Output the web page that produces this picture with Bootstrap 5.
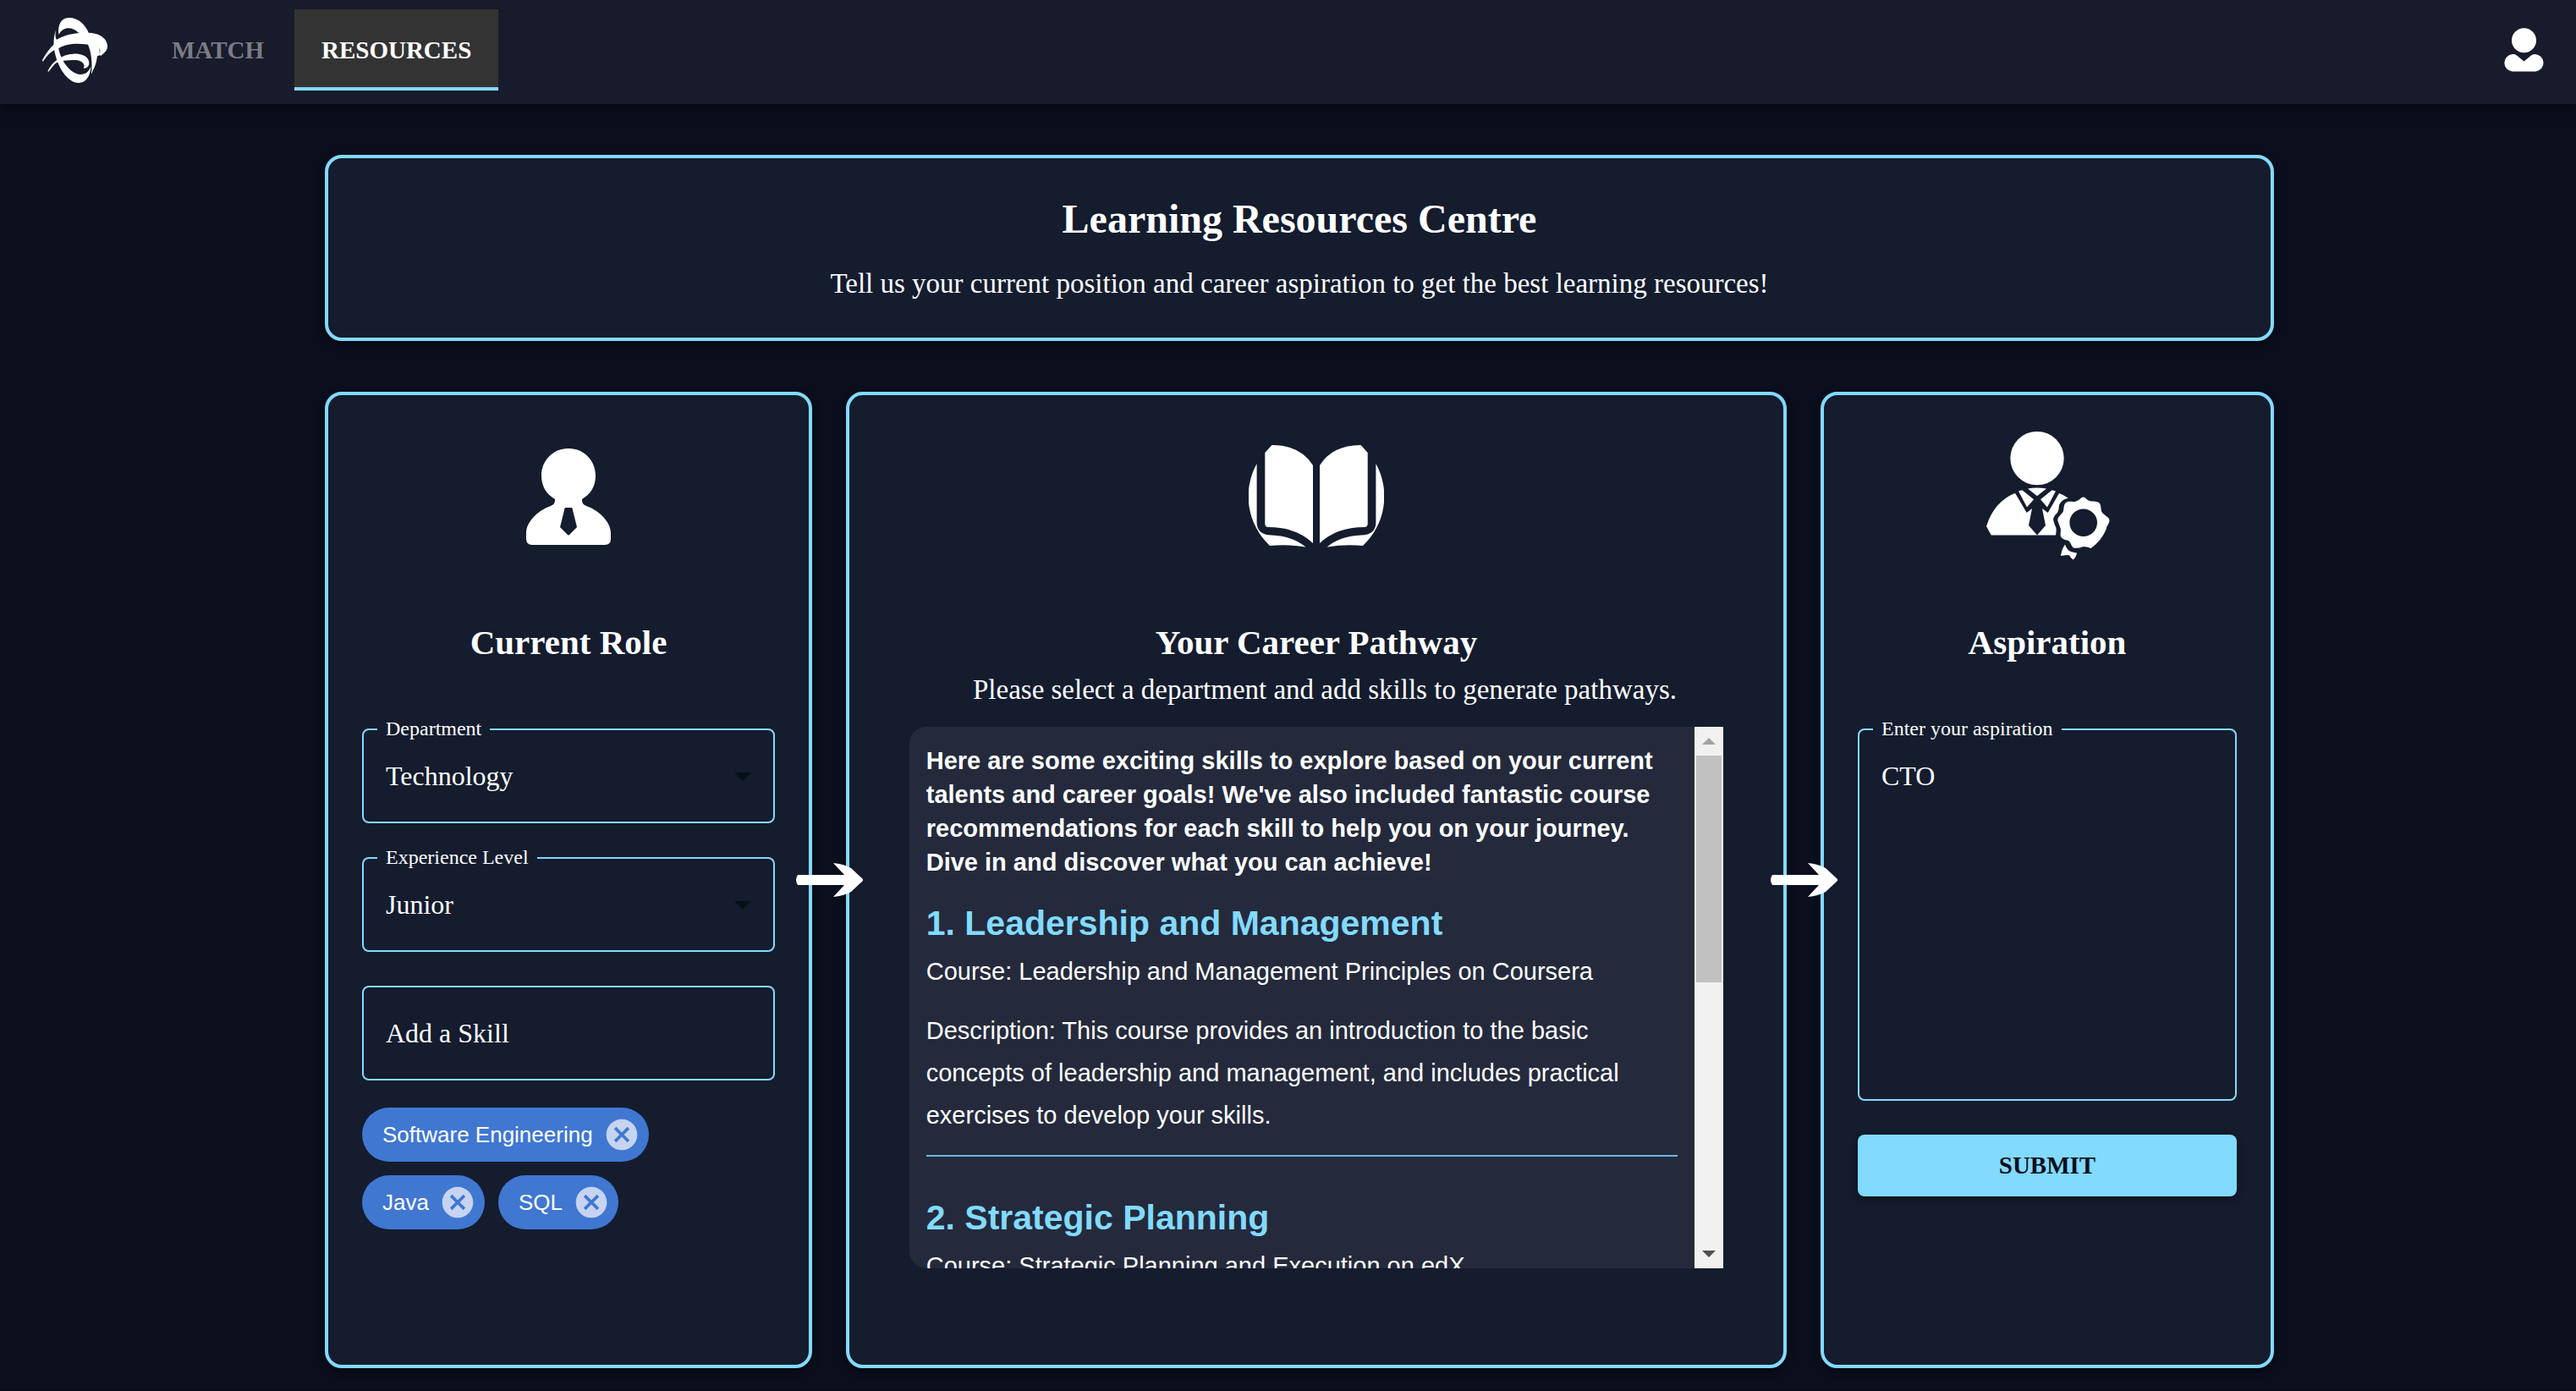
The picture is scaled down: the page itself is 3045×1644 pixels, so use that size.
<!DOCTYPE html>
<html lang="en">
<head>
<meta charset="utf-8">
<meta name="viewport" content="width=device-width, initial-scale=1">
<title>Learning Resources Centre</title>
<link href="https://cdn.jsdelivr.net/npm/bootstrap@5.3.0/dist/css/bootstrap.min.css" rel="stylesheet">
<style>
:root { --accent: #82daff; --page: #0b0e1c; --panel: #141c2e; }
body { background: var(--page); color: #fff; font-family: "Liberation Serif", "Times New Roman", serif; font-size: 33px; line-height: 48px; }
svg { display: block; flex: none; }

/* top bar */
.topbar { background: #181b2b; padding: 11px 37px 16px 50px; box-shadow: 0 4px 12px rgba(0,0,0,.5); position: relative; z-index: 1; }
.topnav { margin-left: 44px; gap: 4px; }
.topnav .nav-link { height: 96px; padding: 4px 32px 0; border-bottom: 4px solid transparent; font-size: 29px; font-weight: 700; color: #7b7c84; display: flex; align-items: center; }
.topnav .nav-link.active { background: #333; color: #fff; border-bottom-color: var(--accent); }

/* page */
.page { padding: 60px 357px 26px 384px; gap: 60px; border-bottom: 1px solid #04060d; }
.panel { background: var(--panel); border: 4px solid var(--accent); border-radius: 20px; padding: 40px; box-shadow: 0 4px 10px rgba(0,0,0,.35); position: relative; }
.panel h1 { font-size: 48px; line-height: 64px; font-weight: 700; margin: 0 0 20px; }
.panel h2 { font-size: 41px; line-height: 64px; font-weight: 700; margin: 60px 0 0; text-align: center; }
.steps { display: grid; grid-template-columns: 72fr 139fr 67fr; gap: 40px; }
.step-arrow { position: absolute; top: 50%; right: -24px; transform: translate(50%, -50%); z-index: 2; }
.hint { margin: 0; padding-left: 20px; text-align: center; }

/* form */
.fields { margin-top: 70px; gap: 40px; }
.field { position: relative; }
.field > label { position: absolute; top: -16px; left: 18px; padding: 0 10px; background: var(--panel); font-size: 24px; line-height: 32px; }
.field .box, .field .box:focus { display: block; width: 100%; height: 112px; border: 2px solid var(--accent); border-radius: 8px; background: none; color: #fff; font-size: 32px; line-height: 40px; padding: 0 26px; box-shadow: none; appearance: none; }
.field textarea.box, .field textarea.box:focus { height: 440px; padding: 34px 26px; resize: none; }
.field .box::placeholder { color: #fff; opacity: 1; }
.caret { position: absolute; right: 28px; top: 52px; pointer-events: none; }
.chips { margin-top: 32px; gap: 16px; }
.chip { height: 64px; border-radius: 32px; background: #4077d1; padding: 0 10px 0 24px; font: 26px/64px "Liberation Sans", Arial, sans-serif; gap: 12px; }
.chip button { border: 0; background: none; padding: 0; color: #c6d4f1; }
.submit, .submit:hover { height: 73px; background: var(--accent); border: 0; border-radius: 8px; color: #0b0e1c; font-size: 29px; font-weight: 700; box-shadow: 0 4px 8px rgba(0,0,0,.35); }

/* results list */
.results { width: 94%; height: 640px; margin: 20px auto 0; background: #242a3c; border-radius: 20px 0 0 20px; overflow: hidden; font-family: "Liberation Sans", Arial, sans-serif; font-size: 29px; line-height: 50px; }
.results-text { padding: 20px; overflow-y: auto; scrollbar-width: none; }
.results-text::-webkit-scrollbar { display: none; }
.results p { margin: 0 0 20px; }
.results .intro { font-weight: 700; line-height: 40px; margin-bottom: 28px; }
.results h3 { color: var(--accent); font-size: 41px; line-height: 48px; font-weight: 700; margin: 0 0 8px; }
.results hr { border: 0; border-top: 2px solid #6db8de; opacity: 1; margin: 22px 0 48px; }
.bar { width: 34px; flex: none; background: #f1f1f1; }
.bar-end { height: 34px; display: flex; align-items: center; justify-content: center; }
.bar-thumb { height: 268px; margin: 0 2px; background: #c1c1c1; }
</style>
</head>
<body>
<div class="d-flex flex-column min-vh-100">
  <header class="topbar d-flex align-items-center">
    <a href="#" aria-label="Home">
      <svg width="77" height="77" viewBox="60 30 231 231" fill="#fff">
        <path d="M118 88C114 50 130 30 155 30C188 30 212 54 226 86L188 83C168 62 134 60 120 88Z"/>
        <path d="M110 108C140 88 190 80 235 84C268 88 290 106 291 130C291 148 281 153 268 165L263 161C269 143 262 133 250 132C205 118 150 118 118 138C95 146 80 158 62 186L60 180Q78 146 103 122Z"/>
        <path d="M108 74C105 92 107 104 112 108L118 138C124 180 158 226 192 231C212 233 226 222 232 202C231 240 212 261 190 261C150 261 112 205 102 140C99 118 101 92 108 74Z"/>
        <path d="M220 120C234 150 238 190 234 230L239 218C254 192 258 160 254 126Z"/>
        <path d="M252 132V160L249 168L264 163L262 134Z"/>
        <path d="M79 220C94 185 130 160 170 158C206 156 227 172 226 192C225 202 218 210 206 209C215 196 200 180 178 180C145 180 120 182 104 194L82 221Z"/>
      </svg>
    </a>
    <nav class="nav topnav">
      <a class="nav-link" href="#">MATCH</a>
      <a class="nav-link active" href="#" aria-current="page">RESOURCES</a>
    </nav>
    <a href="#" class="ms-auto" aria-label="Account">
      <svg width="49" height="52" viewBox="0 0 49 52" fill="#fff">
        <circle cx="24.5" cy="14.7" r="14.5"/>
        <path d="M11 31H13Q14.500 31 16 32.500L24.500 39.500L33 32.500Q34.500 31 37 31A10.500 10.300 0 0 1 38.500 51.500H10.500A10.400 10.300 0 0 1 11 31Z"/>
      </svg>
    </a>
  </header>

  <main class="page d-flex flex-column flex-grow-1">
    <section class="panel text-center">
      <h1>Learning Resources Centre</h1>
      <p class="m-0">Tell us your current position and career aspiration to get the best learning resources!</p>
    </section>

    <div class="steps flex-grow-1">
      <section class="panel">
        <svg class="mx-auto" width="160" height="160" viewBox="0 0 160 160" fill="#fff">
          <path fill-rule="evenodd" d="M80 23C99 23 112 38 112 55C112 68 106 77 96 83Q95 88 101 91C118 97 130 111 130 123V130Q130 137 123 137H37Q30 137 30 130V123C30 111 42 97 59 91Q65 88 64 83C54 77 48 68 48 55C48 38 61 23 80 23ZM77 93Q75 93 75 96L70 116L79 125Q80 126 81 125L90 116L85 96Q85 93 83 93Z"/>
        </svg>
        <h2>Current Role</h2>
        <form class="fields d-flex flex-column">
          <div class="field">
            <select class="box" id="dept"><option>Technology</option></select>
            <label for="dept">Department</label>
            <svg class="caret" width="20" height="10" viewBox="0 0 20 10"><path d="M0 0H20L10 10Z" fill="#090d15"/></svg>
          </div>
          <div class="field">
            <select class="box" id="level"><option>Junior</option></select>
            <label for="level">Experience Level</label>
            <svg class="caret" width="20" height="10" viewBox="0 0 20 10"><path d="M0 0H20L10 10Z" fill="#090d15"/></svg>
          </div>
          <div class="field">
            <input class="box" id="skill" type="text" placeholder="Add a Skill" aria-label="Add a Skill">
          </div>
        </form>
        <div class="chips d-flex flex-wrap">
          <span class="chip d-flex align-items-center">Software Engineering
            <button type="button" aria-label="Remove Software Engineering"><svg width="44" height="44" viewBox="0 0 24 24" fill="currentColor"><path d="M12 2C6.470 2 2 6.470 2 12s4.470 10 10 10 10-4.470 10-10S17.530 2 12 2zm5 13.590L15.590 17 12 13.410 8.410 17 7 15.590 10.590 12 7 8.410 8.410 7 12 10.590 15.590 7 17 8.410 13.410 12 17 15.590z"/></svg></button></span>
          <span class="chip d-flex align-items-center">Java
            <button type="button" aria-label="Remove Java"><svg width="44" height="44" viewBox="0 0 24 24" fill="currentColor"><path d="M12 2C6.470 2 2 6.470 2 12s4.470 10 10 10 10-4.470 10-10S17.530 2 12 2zm5 13.590L15.590 17 12 13.410 8.410 17 7 15.590 10.590 12 7 8.410 8.410 7 12 10.590 15.590 7 17 8.410 13.410 12 17 15.590z"/></svg></button></span>
          <span class="chip d-flex align-items-center">SQL
            <button type="button" aria-label="Remove SQL"><svg width="44" height="44" viewBox="0 0 24 24" fill="currentColor"><path d="M12 2C6.470 2 2 6.470 2 12s4.470 10 10 10 10-4.470 10-10S17.530 2 12 2zm5 13.590L15.590 17 12 13.410 8.410 17 7 15.590 10.590 12 7 8.410 8.410 7 12 10.590 15.590 7 17 8.410 13.410 12 17 15.590z"/></svg></button></span>
        </div>
        <svg class="step-arrow" width="80" height="40" viewBox="0 0 80 40" fill="#fff"><path d="M3 14H58L45 0Q57 1 66 6L80 19V21L66 34Q57 39 45 40L58 26H3Q-1 20 3 14Z"/></svg>
      </section>

      <section class="panel">
        <svg class="mx-auto" width="160" height="160" viewBox="0 0 160 160" fill="#fff">
          <g id="half">
            <path d="M27.500 19L19.300 28V112Q19.300 116 23.500 116Q56 116 76 135V43Q61 19 27.500 19Z"/>
            <path d="M9.600 41A80 80 0 0 0 25 138Q46 136 67.500 139.500Q52 126.500 27 125.500Q10 125 9.600 111Z"/>
          </g>
          <use href="#half" transform="translate(160 0) scale(-1 1)"/>
        </svg>
        <h2>Your Career Pathway</h2>
        <p class="hint">Please select a department and add skills to generate pathways.</p>
        <div class="results d-flex">
          <div class="results-text flex-grow-1">
            <p class="intro">Here are some exciting skills to explore based on your current talents and career goals! We've also included fantastic course recommendations for each skill to help you on your journey. Dive in and discover what you can achieve!</p>
            <h3>1. Leadership and Management</h3>
            <p>Course: Leadership and Management Principles on Coursera</p>
            <p>Description: This course provides an introduction to the basic concepts of leadership and management, and includes practical exercises to develop your skills.</p>
            <hr>
            <h3>2. Strategic Planning</h3>
            <p>Course: Strategic Planning and Execution on edX</p>
          </div>
          <div class="bar d-flex flex-column" aria-hidden="true">
            <div class="bar-end"><svg width="16" height="8" viewBox="0 0 16 8"><path d="M0 8L8 0L16 8Z" fill="#a3a3a3"/></svg></div>
            <div class="bar-thumb"></div>
            <div class="bar-end mt-auto"><svg width="16" height="8" viewBox="0 0 16 8"><path d="M0 0L8 8L16 0Z" fill="#505050"/></svg></div>
          </div>
        </div>
        <svg class="step-arrow" width="80" height="40" viewBox="0 0 80 40" fill="#fff"><path d="M3 14H58L45 0Q57 1 66 6L80 19V21L66 34Q57 39 45 40L58 26H3Q-1 20 3 14Z"/></svg>
      </section>

      <section class="panel">
        <svg class="mx-auto" width="160" height="160" viewBox="0 0 160 160" fill="#fff">
          <ellipse cx="68" cy="34.600" rx="31.700" ry="31.700"/>
          <path d="M42 75.700Q17 86 8 115L13.700 125.600H68L58 114L62 94L55.700 99Z"/>
          <path d="M94 76L80.700 99L74 94L78 114L68 125.600H90Q91 121 90.500 117Q88 112 87 107Q88 102 92 99Q94 95 94 90Q97 83 104.800 81.700Q100 78 94 76Z"/>
          <path d="M46 73.400L50.400 72.200L64 83.300L56 92.400Z"/>
          <path d="M90 73.400L85.600 72.200L72 83.300L80 92.400Z"/>
          <path d="M57 70.600Q68 68.500 79 70.600L68 79.300Z"/>
          <path fill-rule="evenodd" d="M122.700 80.500C125 80.500 127 84 130 85C134 86 140 85 142 88C144 91 143 96 145 99C147 102 153.500 104 153.500 108C153.500 112 150 114 149.500 119Q144 132 131.600 141Q127 139 122.700 139Q116 141.500 111 140.600C108 138 108 134 104.800 132C101 131 97 130 95.900 126.800C95 123 97 119 95 115.700C94 112 92.300 110 92.300 107C93 103 97 101 98.600 98C100 94 99 88 103 86.400C107 85 112 87 115 85C118 84 120 80.500 122.700 80.500ZM122.700 94.500A16.300 16.300 0 1 0 122.700 127.100A16.300 16.300 0 1 0 122.700 94.500Z"/>
          <path d="M101 136.600Q103 143 108 145Q112 146 115 146.500Q114 152 110.600 154.400Q108 153 105.700 149Q101 149 96 150Q97 142 101 136.600Z"/>
        </svg>
        <h2>Aspiration</h2>
        <form class="fields d-flex flex-column">
          <div class="field">
            <textarea class="box" id="aspiration">CTO</textarea>
            <label for="aspiration">Enter your aspiration</label>
          </div>
          <button class="btn submit w-100" type="button">SUBMIT</button>
        </form>
      </section>
    </div>
  </main>
</div>
<script src="https://cdn.jsdelivr.net/npm/bootstrap@5.3.0/dist/js/bootstrap.bundle.min.js"></script>
</body>
</html>
